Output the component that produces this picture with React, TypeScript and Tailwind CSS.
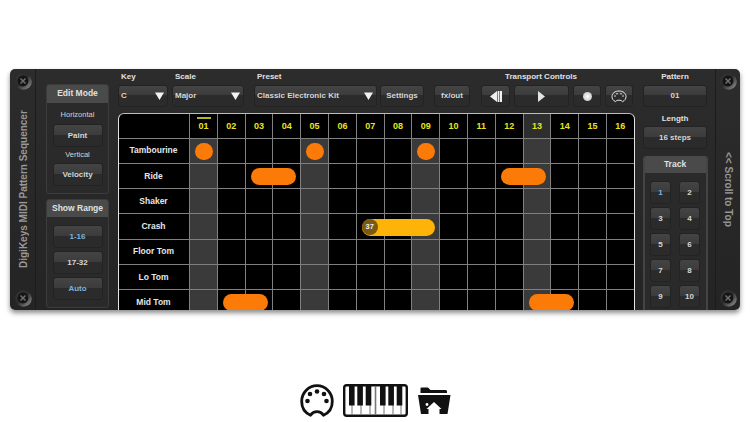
import React from "react";

const steps = Array.from({ length: 16 }, (_, i) => String(i + 1).padStart(2, "0"));
const tracks = ["Tambourine", "Ride", "Shaker", "Crash", "Floor Tom", "Lo Tom", "Mid Tom"];
const notes: { row: number; col: number; span: number; kind?: string }[] = [
  { row: 0, col: 1, span: 1 },
  { row: 0, col: 5, span: 1 },
  { row: 0, col: 9, span: 1 },
  { row: 1, col: 3, span: 2 },
  { row: 1, col: 12, span: 2 },
  { row: 3, col: 7, span: 3, kind: "crash" },
  { row: 6, col: 2, span: 2 },
  { row: 6, col: 13, span: 2 },
];

function Screw({ id }: { id: string }) {
  return (
    <svg width="17" height="17" viewBox="0 0 17 17" className="shrink-0">
      <defs>
        <linearGradient id={id} x1="0" y1="0" x2="1" y2="1">
          <stop offset="0" stopColor="#3a3a3a" />
          <stop offset="0.45" stopColor="#2a2a2a" />
          <stop offset="1" stopColor="#9a9a9a" />
        </linearGradient>
      </defs>
      <circle cx="8.500" cy="8.500" r="8.300" fill={`url(#${id})`} />
      <circle cx="8" cy="8" r="5.400" fill="#141414" />
      <path d="M5.500 5.500l5 5M10.500 5.500l-5 5" stroke="#6e6e6e" strokeWidth="1.500" />
    </svg>
  );
}

function Btn({
  className = "",
  blue = false,
  children,
}: {
  className?: string;
  blue?: boolean;
  children?: React.ReactNode;
}) {
  return (
    <div
      className={`flex items-center justify-center rounded-[3px] border border-[#232323] bg-[linear-gradient(#444444_0%,#3c3c3c_46%,#2b2b2b_47%,#2b2b2b_100%)] text-[8px] font-bold ${blue ? "text-[#7ab4e0]" : "text-[#d6d6d6]"} ${className}`}
    >
      {children}
    </div>
  );
}

function Caret() {
  return (
    <svg width="9" height="8" viewBox="0 0 9 8" className="shrink-0">
      <path d="M0 0.500h9L4.500 8z" fill="#f2f2f2" />
    </svg>
  );
}

function Select({ label, w, ml, text }: { label: string; w: string; ml: string; text: string }) {
  return (
    <div className={`flex flex-col ${w} ${ml}`}>
      <div className="h-[14px] pl-[3px] text-[8px] leading-[11px] font-bold text-[#e0e0e0]">{label}</div>
      <Btn className="h-[22px] !justify-between pr-[3px] pl-[2px]">
        <span>{text}</span>
        <Caret />
      </Btn>
    </div>
  );
}

function Plain({ w, ml, text }: { w: string; ml: string; text: string }) {
  return (
    <div className={`flex flex-col ${w} ${ml}`}>
      <div className="h-[14px]" />
      <Btn className="h-[22px]">{text}</Btn>
    </div>
  );
}

function MidiSmall() {
  return (
    <svg width="16" height="13" viewBox="0 0 16 13" fill="none">
      <path
        d="M4.500 11.600C2 10.600 1 8.600 1 6.600 1 3.200 4 1 8 1s7 2.200 7 5.600c0 2-1 4-3.500 5-.8-1-2-1.400-3.500-1.400s-2.700.4-3.500 1.400z"
        stroke="#e8e8e8"
        strokeWidth="1"
      />
      <circle cx="4" cy="6" r=".8" fill="#e8e8e8" />
      <circle cx="6" cy="3.800" r=".8" fill="#e8e8e8" />
      <circle cx="10" cy="3.800" r=".8" fill="#e8e8e8" />
      <circle cx="12" cy="6" r=".8" fill="#e8e8e8" />
    </svg>
  );
}

function MidiIcon() {
  return (
    <svg width="34" height="34" viewBox="0 0 34 34" fill="none">
      <path
        d="M10.500 31.200C5 28.800 1.700 23.500 1.700 17.500 1.700 8.700 8.700 1.700 17 1.700s15.300 7 15.300 15.800c0 6-3.300 11.300-8.800 13.700-1.600-2.300-3.800-3.500-6.500-3.500s-4.900 1.200-6.500 3.500z"
        stroke="#111"
        strokeWidth="2.800"
        strokeLinejoin="round"
      />
      <circle cx="7.500" cy="17" r="2.300" fill="#111" />
      <circle cx="10" cy="10" r="2.300" fill="#111" />
      <circle cx="17" cy="7.500" r="2.300" fill="#111" />
      <circle cx="24" cy="10" r="2.300" fill="#111" />
      <circle cx="26.500" cy="17" r="2.300" fill="#111" />
    </svg>
  );
}

function KeysIcon() {
  const blacks = [6, 14.3, 22.7, 37, 45.3, 53.7];
  const whites = [9, 18, 27, 32.500, 41, 50, 58];
  return (
    <svg width="65" height="33" viewBox="0 0 65 33" fill="none">
      <rect x="1.200" y="1.200" width="62.600" height="30.600" rx="2.500" fill="#fff" stroke="#111" strokeWidth="2.400" />
      {whites.map((x) => (
        <path key={x} d={`M${x} 2v29`} stroke="#777" strokeWidth={x === 32.5 ? 1.6 : 1} />
      ))}
      {blacks.map((x) => (
        <rect key={x} x={x} y="2" width="5.600" height="19.500" fill="#111" />
      ))}
    </svg>
  );
}

function FolderIcon() {
  return (
    <svg width="33" height="28" viewBox="0 0 33 28" fill="none">
      <path d="M2.500 6V1.500q0-1 1-1h6.500l2.500 2.500h15q1 0 1.500 1L29 6z" fill="#111" />
      <path fillRule="evenodd" d="M0 8H32.500L29.500 27H3zM16 15L8.500 22h2v5h11v-5h2z" fill="#111" />
      <circle cx="9" cy="17.500" r="1.400" fill="#fff" />
    </svg>
  );
}

export default function App() {
  return (
    <div className="flex h-[422px] w-[750px] flex-col items-center overflow-hidden bg-white font-['Liberation_Sans',Arial,sans-serif]">
      <div className="mt-[69px] flex h-[241px] w-[730px] shrink-0 overflow-hidden rounded-[5px] bg-[linear-gradient(#2c2c2c,#242424)] shadow-[0_3px_5px_rgba(0,0,0,0.45)]">
        {/* left rail */}
        <div className="flex w-[26px] shrink-0 flex-col items-center border-r border-[#1c1c1c] pt-[4px] pb-[3px] pl-[2px]">
          <Screw id="s1" />
          <div className="mt-[20px] flex-1 rotate-180 pt-[22px] text-[10px] leading-[14px] font-bold whitespace-nowrap text-[#989898] [writing-mode:vertical-rl]">
            DigiKeys MIDI Pattern Sequencer
          </div>
          <Screw id="s2" />
        </div>

        {/* left column */}
        <div className="flex w-[82px] shrink-0 flex-col gap-[5px] pt-[15px] pl-[10px]">
          <div className="flex h-[110px] w-[63px] flex-col overflow-hidden rounded-[3px] border border-[#3c3c3c] bg-[#2a2a2a]">
            <div className="flex h-[18px] shrink-0 items-center justify-center bg-[#4a4a4a] pb-[2px] text-[8.500px] font-bold text-[#e0e0e0]">
              Edit Mode
            </div>
            <div className="flex flex-col items-center">
              <div className="flex h-[21px] items-center pt-[3px] text-[7.500px] text-[#d4d4d4]">Horizontal</div>
              <Btn className="h-[23px] w-[50px]">Paint</Btn>
              <div className="flex h-[16px] items-center text-[7.500px] text-[#d4d4d4]">Vertical</div>
              <Btn className="h-[23px] w-[50px]">Velocity</Btn>
            </div>
          </div>
          <div className="flex h-[109px] w-[63px] flex-col gap-[8px] overflow-hidden rounded-[3px] border border-[#3c3c3c] bg-[#2a2a2a]">
            <div className="flex h-[17px] shrink-0 items-center justify-center bg-[#4a4a4a] text-[8.500px] font-bold text-[#e0e0e0]">
              Show Range
            </div>
            <div className="flex flex-col items-center gap-[3px]">
              <Btn blue className="h-[23px] w-[50px]">1-16</Btn>
              <Btn className="h-[23px] w-[50px]">17-32</Btn>
              <Btn blue className="h-[23px] w-[50px]">Auto</Btn>
            </div>
          </div>
        </div>

        {/* main */}
        <div className="flex w-[517px] shrink-0 flex-col pt-[2px]">
          <div className="flex h-[42px] shrink-0">
            <Select label="Key" w="w-[50px]" ml="ml-[0px]" text="C" />
            <Select label="Scale" w="w-[72px]" ml="ml-[4px]" text="Major" />
            <Select label="Preset" w="w-[123px]" ml="ml-[10px]" text="Classic Electronic Kit" />
            <Plain w="w-[44px]" ml="ml-[3px]" text="Settings" />
            <Plain w="w-[36px]" ml="ml-[10px]" text="fx/out" />
            <div className="ml-[11px] flex w-[152px] flex-col">
              <div className="h-[14px] pl-[24px] text-[8px] leading-[11px] font-bold whitespace-nowrap text-[#e0e0e0]">
                Transport Controls
              </div>
              <div className="flex gap-[4px]">
                <Btn className="h-[22px] w-[29px]">
                  <svg width="12" height="11" viewBox="0 0 12 11">
                    <path d="M7 0v11L0 5.500z" fill="#f0f0f0" />
                    <rect x="7.600" y="0" width="1.800" height="11" fill="#f0f0f0" />
                    <rect x="10" y="0" width="2" height="11" fill="#f0f0f0" />
                  </svg>
                </Btn>
                <Btn className="h-[22px] w-[55px]">
                  <svg width="7" height="11" viewBox="0 0 7 11">
                    <path d="M0 0l7 5.500-7 5.500z" fill="#e4e4e4" />
                  </svg>
                </Btn>
                <Btn className="h-[22px] w-[28px]">
                  <div className="h-[9px] w-[9px] rounded-full bg-[radial-gradient(#ffffff,#b5b5b5)]" />
                </Btn>
                <Btn className="h-[22px] w-[28px]">
                  <MidiSmall />
                </Btn>
              </div>
            </div>
          </div>

          {/* grid */}
          <div className="h-[197px] w-[517px] shrink-0 overflow-hidden rounded-t-[6px] border-x border-t border-x-[#e4e4e4] border-t-[#bdbdbd] bg-black">
            <div className="grid grid-cols-[71px_repeat(16,27.800px)] grid-rows-[24.500px_repeat(7,25.300px)]">
              <div className="border-r border-b border-[#808080]" />
              {steps.map((s, i) => (
                <div
                  key={s}
                  className={`relative flex items-center justify-center border-r border-b border-[#808080] pt-[1px] text-[9px] font-bold text-[#e6e61e] ${s === "13" ? "bg-[#2e2e2e]" : ""}`}
                >
                  {i === 0 && <div className="absolute top-[3px] left-[7px] h-[2px] w-[14px] bg-[#b5b51e]" />}
                  {s}
                </div>
              ))}
              {tracks.map((t, r) => (
                <React.Fragment key={t}>
                  <div
                    style={{ gridRow: r + 2, gridColumn: 1 }}
                    className="flex items-center justify-center border-r border-b border-[#808080] pr-[1px] text-[8.500px] font-bold text-[#e6e6e6]"
                  >
                    {t}
                  </div>
                  {steps.map((s, c) => (
                    <div
                      key={s}
                      style={{ gridRow: r + 2, gridColumn: c + 2 }}
                      className={`border-r border-b border-[#808080] ${c % 4 === 0 ? "bg-[#3a3a3a]" : ""}`}
                    />
                  ))}
                </React.Fragment>
              ))}
              {notes.map((n, i) => (
                <div
                  key={i}
                  style={{ gridRow: n.row + 2, gridColumn: `${n.col + 1} / span ${n.span}` }}
                  className={`z-10 mx-[5px] flex h-[17px] items-center self-center rounded-full ${n.kind === "crash" ? "bg-[#feb308]" : "bg-[#fc7a08]"}`}
                >
                  {n.kind === "crash" && (
                    <div className="flex h-[16px] w-[16px] items-center justify-center rounded-full bg-[#7a5a10] text-[7.500px] font-bold text-[#eee]">
                      37
                    </div>
                  )}
                </div>
              ))}
            </div>
          </div>
        </div>

        {/* right column */}
        <div className="flex w-[80px] shrink-0 flex-col items-center pt-[2px]">
          <div className="flex h-[14px] items-start text-[8px] leading-[11px] font-bold text-[#e0e0e0]">Pattern</div>
          <Btn className="h-[22px] w-[64px]">01</Btn>
          <div className="flex h-[19px] items-center pt-[4px] text-[8px] font-bold text-[#e0e0e0]">Length</div>
          <Btn className="h-[23px] w-[64px]">16 steps</Btn>
          <div className="mt-[7px] flex w-[65px] flex-1 flex-col overflow-hidden rounded-t-[3px] border-x-2 border-[#444] bg-[#2a2a2a]">
            <div className="flex h-[17px] shrink-0 items-center justify-center bg-[#4a4a4a] text-[8.500px] font-bold text-[#e0e0e0]">
              Track
            </div>
            <div className="grid grid-cols-[21px_21px] justify-center gap-x-[8px] gap-y-[3px] pt-[8px]">
              {Array.from({ length: 10 }, (_, i) => (
                <Btn key={i} blue={i === 0} className="h-[23px] w-[21px] pt-[1px]">
                  {i + 1}
                </Btn>
              ))}
            </div>
          </div>
        </div>

        {/* right rail */}
        <div className="flex w-[25px] shrink-0 flex-col items-center border-l border-[#1c1c1c] pt-[4px] pb-[3px]">
          <Screw id="s3" />
          <div className="mt-[62px] flex-1 text-[10px] leading-[14px] font-bold whitespace-nowrap text-[#989898] [writing-mode:vertical-rl]">
            {"<< Scroll to Top"}
          </div>
          <Screw id="s4" />
        </div>
      </div>

      <div className="mt-[74px] flex items-start">
        <MidiIcon />
        <div className="ml-[9px]">
          <KeysIcon />
        </div>
        <div className="ml-[10px] mt-[3px]">
          <FolderIcon />
        </div>
      </div>
    </div>
  );
}
